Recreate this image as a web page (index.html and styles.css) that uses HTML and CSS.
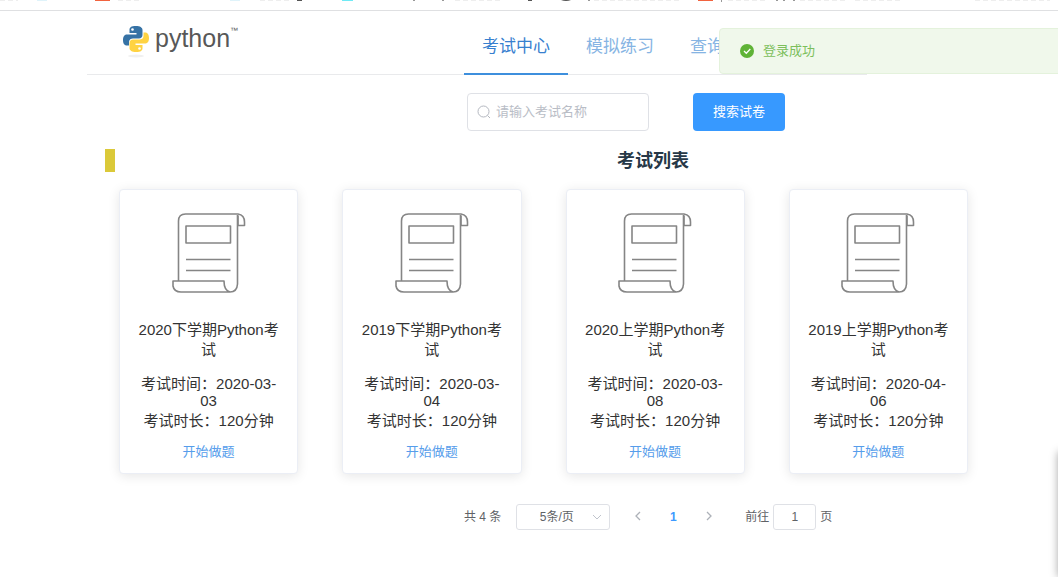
FILE: index.html
```html
<!DOCTYPE html>
<html lang="zh-CN">
<head>
<meta charset="utf-8">
<title>考试中心</title>
<link rel="stylesheet" href="styles.css">
</head>
<body>
<svg class="defs" width="0" height="0" aria-hidden="true">
  <symbol id="paper" viewBox="0 0 74 82">
    <g fill="none" stroke="#858585" stroke-width="1.6" stroke-linejoin="round">
      <path d="M6.500 69V9Q6.500 2 13.500 2H66Q72.500 3 72.500 10V13.500H66V3.500"/>
      <path d="M65.500 3V72Q65 80 58 80Q52 78.500 52 69H1V74Q2 80 9 80H58"/>
      <path d="M14 14H58.500V31H14ZM14 47.500H58.500M14 58.500H58.500"/>
    </g>
  </symbol>
</svg>
<div class="bookmarks">
  <svg width="1058" height="4" aria-hidden="true">
    <path d="M95 0h15v1h-15zM698 0h15v1h-15z" fill="#f1633f"/>
    <path d="M342 0h11v1h-11z" fill="#70eaf5"/>
    <path d="M37 0h10v1h-10zM230 0h10v1h-10z" fill="#dff3fa"/>
    <path d="M297 0h5v1h-5zM528 0h4v1h-4zM561 0h10q-5 2-10 0z" fill="#555"/>
    <path d="M413 0h2v1h-2zM442 0h2v1h-2zM588 0h2v1h-2zM721 0h1v2h-1zM776 0h2v1h-2zM783 0h2v1h-2zM793 0h2v1h-2z" fill="#999"/>
    <path d="M0 0H18M118 0H140M260 0H290M455 0H500M594 0H680M728 0H765M800 0H845M855 0H900M975 0H1050" stroke="#ddd" stroke-dasharray="5 3"/>
  </svg>
</div>
<div class="container">
  <header class="header">
    <a class="logo" href="#">
      <svg width="28" height="34" viewBox="0 0 28 34" aria-hidden="true">
        <ellipse cx="14" cy="31" rx="8" ry="1.500" fill="#f0f0f0"/>
        <path d="M14 1C9 1 7.500 2.500 7.500 5V8H14.500V9.500H5C2 9.500 1 12 1 15S2 20.500 5 20.500H7V17C7 14.500 9 13.500 11 13.500H17C19 13.500 20.500 12 20.500 10V5C20.500 2.500 18 1 14 1Z" fill="#3672a5"/>
        <path d="M14 27C19 27 20.500 25.500 20.500 23V20H13.500V18.500H23C26 18.500 27 16 27 13S26 7.500 23 7.500H21.500V11C21.500 13.500 19.500 14.500 17.500 14.500H11C9 14.500 7.500 16 7.500 18V23C7.500 25.500 10 27 14 27Z" fill="#ffd342"/>
        <circle cx="10.500" cy="4.500" r="1.300" fill="#fff"/><circle cx="17.500" cy="23.500" r="1.300" fill="#fff"/>
      </svg>
      <span class="wordmark">python</span><sup class="tm">™</sup>
    </a>
    <nav class="nav">
      <a class="active" href="#">考试中心</a><a href="#">模拟练习</a><a href="#">查询分数</a>
    </nav>
  </header>
  <main>
    <form class="search">
      <label class="search-box">
        <svg width="14" height="14" viewBox="0 0 14 14" fill="none" stroke="#b4b8c0" aria-hidden="true"><circle cx="6.500" cy="6.500" r="5.500"/><path d="M10.500 10.500L13 13"/></svg>
        <input type="text" placeholder="请输入考试名称" aria-label="考试名称">
      </label>
      <button class="primary" type="button">搜索试卷</button>
    </form>
    <div class="title"><i class="mark"></i><h1>考试列表</h1></div>
    <section class="cards">
      <article class="card"><svg class="paper" aria-hidden="true"><use href="#paper"/></svg><h2>2020下学期Python考试</h2><p class="date">考试时间：2020-03-03</p><p class="time">考试时长：120分钟</p><a href="#">开始做题</a></article>
      <article class="card"><svg class="paper" aria-hidden="true"><use href="#paper"/></svg><h2>2019下学期Python考试</h2><p class="date">考试时间：2020-03-04</p><p class="time">考试时长：120分钟</p><a href="#">开始做题</a></article>
      <article class="card"><svg class="paper" aria-hidden="true"><use href="#paper"/></svg><h2>2020上学期Python考试</h2><p class="date">考试时间：2020-03-08</p><p class="time">考试时长：120分钟</p><a href="#">开始做题</a></article>
      <article class="card"><svg class="paper" aria-hidden="true"><use href="#paper"/></svg><h2>2019上学期Python考试</h2><p class="date">考试时间：2020-04-06</p><p class="time">考试时长：120分钟</p><a href="#">开始做题</a></article>
    </section>
    <div class="pagination">
      <span>共 4 条</span>
      <span class="size"><select aria-label="每页条数"><option>5条/页</option></select><svg width="10" height="6" viewBox="0 0 10 6" aria-hidden="true"><path d="M1 1l4 4 4-4" fill="none" stroke="#c0c4cc"/></svg></span>
      <div class="pager">
        <button type="button" aria-label="上一页"><svg width="7" height="10" viewBox="0 0 7 10"><path d="M6 1L2 5l4 4" fill="none" stroke="#adb1b8" stroke-width="1.300"/></svg></button>
        <button type="button" class="current">1</button>
        <button type="button" aria-label="下一页"><svg width="7" height="10" viewBox="0 0 7 10"><path d="M1 1l4 4-4 4" fill="none" stroke="#adb1b8" stroke-width="1.300"/></svg></button>
      </div>
      <label class="jump">前往<input type="text" value="1">页</label>
    </div>
  </main>
</div>
<div class="message" role="alert">
  <svg width="14" height="14" viewBox="0 0 14 14" aria-hidden="true"><circle cx="7" cy="7" r="7" fill="#5fb336"/><path d="M4 7l2.300 2.300L10.300 5" fill="none" stroke="#fff" stroke-width="1.300"/></svg>
  <span>登录成功</span>
</div>
<div class="edge"></div>
</body>
</html>
```
FILE: styles.css
```css
* { box-sizing: border-box; }
body { margin: 0; background: #fff; color: #333; font: 15px/18px "Liberation Sans", "Noto Sans CJK SC", sans-serif; overflow: hidden; }
a { text-decoration: none; }
h1, h2, p { margin: 0; font-weight: 400; }
button, input, select { font: inherit; }
.defs { position: absolute; }
.bookmarks { height: 11px; border-bottom: 1px solid #dfe0e2; overflow: hidden; }
.bookmarks svg { display: block; }
.container { margin-left: 87px; margin-right: 57px; }
.header { display: flex; height: 64px; margin-right: 134px; border-bottom: 1px solid #e9eaec; }
.logo { display: flex; width: 377px; padding: 14px 0 0 35px; color: #585858; }
.wordmark { margin-left: 5px; font: 25px/26px "Liberation Sans Narrow", "Liberation Sans", sans-serif; }
.tm { font-size: 8px; line-height: 12px; }
.nav { display: flex; height: 64px; }
.nav a { flex: none; padding: 0 18px; border-bottom: 2px solid transparent; font-size: 17px; line-height: 72px; color: #86b4e3; }
.nav .active { color: #3780cf; border-color: #3d8fdd; }
.search { display: flex; gap: 44px; margin: 18px 0 0 380px; }
.search-box { display: flex; align-items: center; gap: 5px; width: 182px; height: 38px; padding: 0 9px; border: 1px solid #dfe1e6; border-radius: 4px; }
.search-box svg { flex: none; }
.search-box input { width: 100%; min-width: 0; padding: 0; border: 0; outline: 0; background: none; font-size: 13px; color: #606266; }
.search-box input::placeholder { color: #b9bdc6; }
.primary { width: 92px; height: 38px; padding: 0; border: 0; border-radius: 4px; background: #3799ff; color: #fff; font-size: 13px; }
.title { display: flex; align-items: center; height: 24px; margin-top: 17px; padding-left: 18px; }
.mark { width: 10px; height: 23px; background: #dbc939; }
.title h1 { flex: 1; padding-left: 190px; text-align: center; font-size: 18px; line-height: 22px; padding-top: 2px; font-weight: 700; color: #263847; }
.cards { display: grid; grid-template-columns: repeat(4, 1fr); gap: 44px; margin: 17px 33px 0 32px; }
.card { height: 285px; padding: 20px; text-align: center; background: #fff; border: 1px solid #ebeef5; border-radius: 4px; box-shadow: 0 2px 12px rgba(0, 0, 0, .1); }
.paper { display: block; width: 74px; height: 82px; margin: 2px auto 26px; }
.card h2 { margin: 0 -4px; font-size: 15px; line-height: 20px; }
.date { margin-top: 15px; line-height: 17px; }
.time { margin-top: 2px; line-height: 20px; }
.card a { display: block; margin-top: 11px; font-size: 13px; line-height: 20px; color: #569deb; }
.pagination { display: flex; align-items: center; margin: 30px 0 0 377px; font-size: 12px; color: #606266; }
.size { display: flex; align-items: center; width: 94px; height: 26px; margin-left: 15px; padding-right: 7px; border: 1px solid #dfe1e6; border-radius: 3px; }
.size select { flex: 1; min-width: 0; padding: 0 0 0 4px; border: 0; appearance: none; background: none; color: #606266; text-align: center; }
.pager { display: flex; margin-left: 9px; }
.pager button { width: 36px; height: 26px; padding: 0; border: 0; background: none; }
.pager .current { color: #3d9aff; font-weight: 700; }
.jump { display: flex; align-items: center; gap: 4px; margin-left: 18px; }
.jump input { width: 43px; height: 26px; padding: 0; border: 1px solid #dfe1e6; border-radius: 3px; text-align: center; color: #606266; }
.message { position: absolute; top: 28px; left: 719px; right: -4px; display: flex; align-items: center; gap: 9px; height: 46px; padding-left: 20px; border: 1px solid #e4f2dc; border-radius: 4px; background: #f0f8eb; color: #7cbf5b; font-size: 13px; }
.edge { position: absolute; top: 452px; bottom: 0; left: 100%; width: 10px; box-shadow: 0 0 8px rgba(0, 0, 0, .35); }
```
